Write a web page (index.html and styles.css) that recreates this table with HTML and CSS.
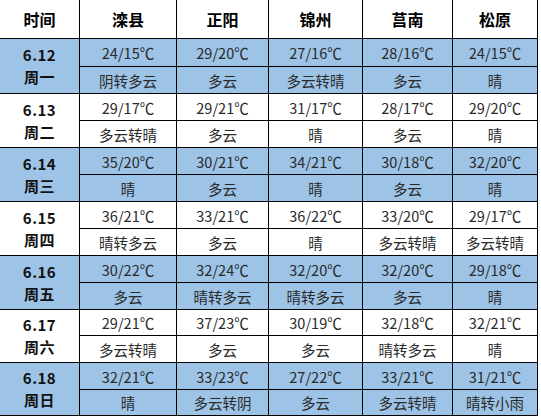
FILE: index.html
```html
<!DOCTYPE html>
<html lang="zh">
<head>
<meta charset="utf-8">
<link rel="stylesheet" href="styles.css">
</head>
<body>
<div class="grid">
  <div class="h">时间</div><div class="h">滦县</div><div class="h">正阳</div><div class="h">锦州</div><div class="h">莒南</div><div class="h">松原</div>

  <div class="d b"><span>6.12</span><span>周一</span></div>
  <div class="c b">24/15℃</div><div class="c b">29/20℃</div><div class="c b">27/16℃</div><div class="c b">28/16℃</div><div class="c b">24/15℃</div>
  <div class="c b">阴转多云</div><div class="c b">多云</div><div class="c b">多云转晴</div><div class="c b">多云</div><div class="c b">晴</div>

  <div class="d"><span>6.13</span><span>周二</span></div>
  <div class="c">29/17℃</div><div class="c">29/21℃</div><div class="c">31/17℃</div><div class="c">28/17℃</div><div class="c">29/20℃</div>
  <div class="c">多云转晴</div><div class="c">多云</div><div class="c">晴</div><div class="c">多云</div><div class="c">晴</div>

  <div class="d b"><span>6.14</span><span>周三</span></div>
  <div class="c b">35/20℃</div><div class="c b">30/21℃</div><div class="c b">34/21℃</div><div class="c b">30/18℃</div><div class="c b">32/20℃</div>
  <div class="c b">晴</div><div class="c b">多云</div><div class="c b">晴</div><div class="c b">多云</div><div class="c b">晴</div>

  <div class="d"><span>6.15</span><span>周四</span></div>
  <div class="c">36/21℃</div><div class="c">33/21℃</div><div class="c">36/22℃</div><div class="c">33/20℃</div><div class="c">29/17℃</div>
  <div class="c">晴转多云</div><div class="c">多云</div><div class="c">晴</div><div class="c">多云转晴</div><div class="c">多云转晴</div>

  <div class="d b"><span>6.16</span><span>周五</span></div>
  <div class="c b">30/22℃</div><div class="c b">32/24℃</div><div class="c b">32/20℃</div><div class="c b">32/20℃</div><div class="c b">29/18℃</div>
  <div class="c b">多云</div><div class="c b">晴转多云</div><div class="c b">晴转多云</div><div class="c b">多云</div><div class="c b">晴</div>

  <div class="d"><span>6.17</span><span>周六</span></div>
  <div class="c">29/21℃</div><div class="c">37/23℃</div><div class="c">30/19℃</div><div class="c">32/18℃</div><div class="c">32/21℃</div>
  <div class="c">多云转晴</div><div class="c">多云</div><div class="c">多云</div><div class="c">晴转多云</div><div class="c">晴</div>

  <div class="d b"><span>6.18</span><span>周日</span></div>
  <div class="c b">32/21℃</div><div class="c b">33/23℃</div><div class="c b">27/22℃</div><div class="c b">33/21℃</div><div class="c b">31/21℃</div>
  <div class="c b">晴</div><div class="c b">多云转阴</div><div class="c b">多云</div><div class="c b">多云转晴</div><div class="c b">晴转小雨</div>
</div>
</body>
</html>
```
FILE: styles.css
```css
html, body {
  margin: 0;
  padding: 0;
  background: #fff;
}
.grid {
  display: grid;
  width: 537px;
  grid-template-columns: 79px 96px 91px 93px 89px 84px;
  grid-template-rows: 38px 27px 26px 26px 26px 26px 26px 26px 26px 26px 26px 25px 26px 26px 25px;
  gap: 1px;
  background: #000;
  padding: 0 1px 1px 0;
  font-family: "Liberation Sans", "Noto Sans CJK SC", sans-serif;
}
.grid > div {
  background: #fff;
  display: flex;
  align-items: center;
  justify-content: center;
  text-align: center;
}
.grid > .b {
  background: #9dc3e6;
}
.h {
  font-family: "Noto Sans CJK SC", sans-serif;
  font-weight: bold;
  font-size: 16px;
  color: #000;
}
.grid > .d {
  grid-row: span 2;
  flex-direction: column;
  font-family: "Noto Sans CJK SC", sans-serif;
  font-weight: bold;
  font-size: 15px;
  line-height: 22px;
  letter-spacing: 0.5px;
  color: #111;
}
.d span {
  display: block;
}
.c {
  font-size: 14.5px;
  color: #2a2a2a;
  font-family: "Noto Sans CJK SC", sans-serif;
}
```
